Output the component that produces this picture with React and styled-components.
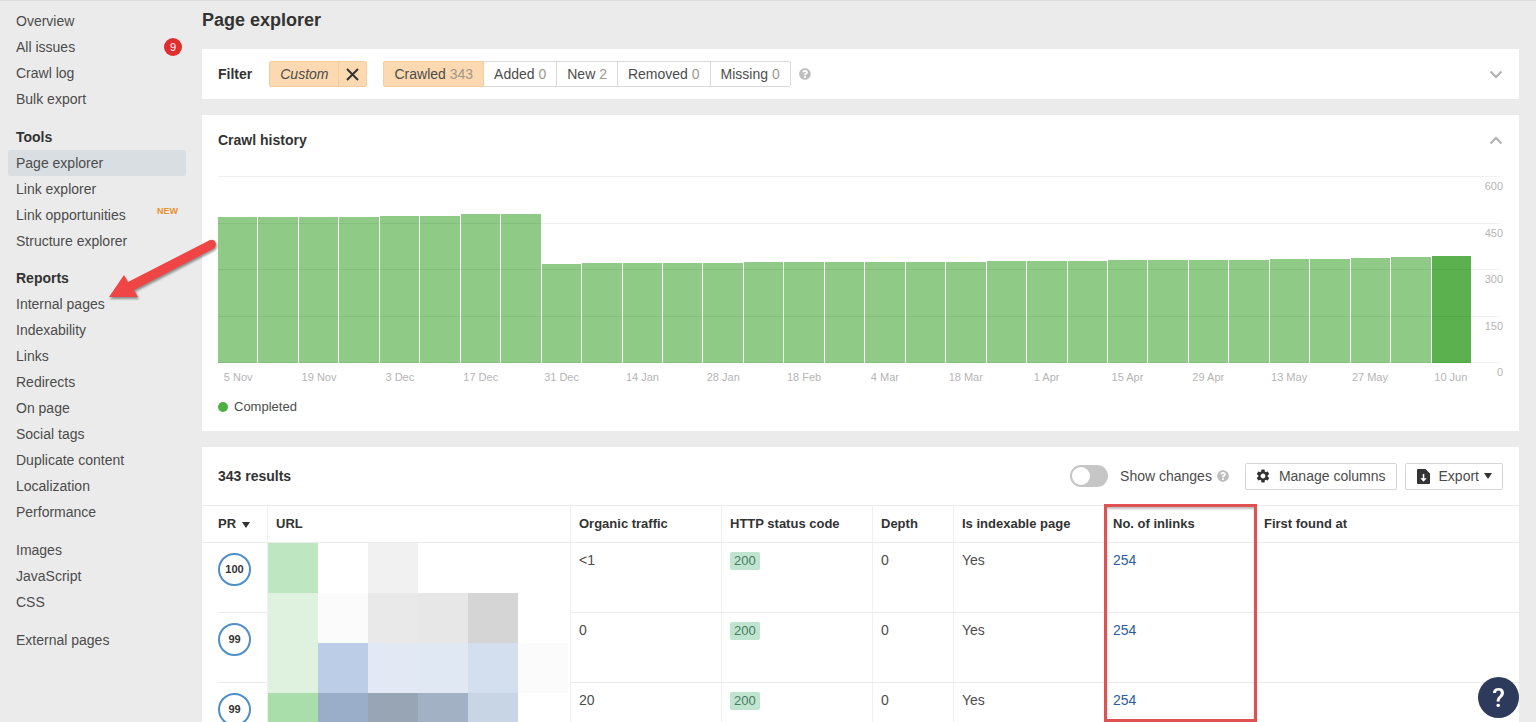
import { useState } from "react";
import styled, { createGlobalStyle } from "styled-components";
import { FaQuestionCircle } from "react-icons/fa";
import { MdSettings } from "react-icons/md";

const GlobalStyle = createGlobalStyle`
  *, *::before, *::after {
    box-sizing: border-box;
  }

  body {
    margin: 0;
    background: #ebebeb;
    color: #4c4c4c;
    font-family: "Liberation Sans", Arial, sans-serif;
    font-size: 14px;
    line-height: 18px;
  }

  button {
    font: inherit;
    color: inherit;
    cursor: pointer;
  }
`;

const Layout = styled.div`
  display: flex;
  gap: 16px;
  height: 100vh;
  overflow: hidden;
  padding-right: 17px;
  border-top: 1px solid #dcdcdc;
`;

/* ---------- sidebar ---------- */

const Sidebar = styled.nav`
  position: relative;
  flex: 0 0 186px;
  padding: 7px 0 0 8px;
`;

const NavGroup = styled.div`
  margin-bottom: ${(props) => (props.$tight ? "11px" : "12px")};
`;

const NavHeading = styled.h2`
  margin: 0;
  padding: 4px 8px;
  color: #333;
  font-size: 14px;
  line-height: 18px;
`;

const NavLink = styled.a`
  display: flex;
  justify-content: space-between;
  align-items: center;
  height: 26px;
  padding: 0 8px;
  border-radius: 2px;
  background: ${(props) => (props.$active ? "#d9dee2" : "transparent")};
  color: #4c4c4c;
  text-decoration: none;
  white-space: nowrap;
`;

const Badge = styled.span`
  width: 18px;
  height: 18px;
  margin-right: -4px;
  border-radius: 50%;
  background: #e12d2d;
  color: #fff;
  font-size: 11px;
  text-align: center;
`;

const NewTag = styled.span`
  align-self: flex-start;
  color: #e8912d;
  font-size: 9px;
  font-weight: 700;
`;

const Arrow = styled.svg`
  position: absolute;
  top: 234px;
  left: 104px;
  z-index: 3;
  width: 120px;
  height: 74px;
  filter: drop-shadow(1px 2px 1px rgba(0, 0, 0, 0.4));
`;

/* ---------- main column ---------- */

const Main = styled.main`
  flex: 1;
  min-width: 0;
`;

const PageTitle = styled.h1`
  margin: 0;
  padding: 7px 0 17px;
  color: #333;
  font-size: 18px;
  line-height: 24px;
`;

const Panel = styled.section`
  margin-bottom: 16px;
  background: #fff;
`;

const PanelTitle = styled.h2`
  margin: 0;
  color: #333;
  font-size: 14px;
  line-height: 18px;
`;

const FilterPanel = styled(Panel)`
  display: flex;
  align-items: center;
  height: 50px;
  padding: 0 16px;
`;

const CustomChip = styled.div`
  display: flex;
  height: 26px;
  margin: 0 16px 0 17px;
  border: 1px solid #f3cd9f;
  border-radius: 2px;
  background: #fcd9b0;
`;

const ChipButton = styled.button`
  display: flex;
  align-items: center;
  padding: 0 10px;
  border: 0;
  background: none;
  font-style: italic;
`;

const ChipClose = styled.button`
  display: flex;
  align-items: center;
  padding: 0 7px;
  border: 0;
  border-left: 1px solid #f3cd9f;
  background: none;
`;

const Segments = styled.div`
  display: flex;
`;

const Segment = styled.button`
  height: 26px;
  padding: 0 10px;
  border: 1px solid ${(props) => (props.$active ? "#f3cd9f" : "#d9d9d9")};
  border-left-width: ${(props) => (props.$active ? "1px" : "0")};
  background: ${(props) => (props.$active ? "#fcd9b0" : "#fff")};

  &:first-child {
    border-radius: 2px 0 0 2px;
  }

  &:last-child {
    border-radius: 0 2px 2px 0;
  }

  span {
    color: #a0978d;
  }
`;

const Help = styled(FaQuestionCircle)`
  flex: none;
  width: 12px;
  height: 12px;
  color: #bdbdbd;
`;

const FilterHelp = styled(Help)`
  margin-left: 8px;
`;

const CollapseButton = styled.button`
  display: flex;
  margin-left: auto;
  padding: 0;
  border: 0;
  background: none;
  color: #b0b0b0;
`;

/* ---------- crawl history ---------- */

const HistoryPanel = styled(Panel)`
  padding: 16px 16px 15px;
`;

const PanelHead = styled.div`
  display: flex;
  align-items: center;
  margin-bottom: 27px;
`;

const Plot = styled.div`
  display: grid;
  height: 187px;
`;

const Scale = styled.div`
  grid-area: 1 / 1;
  z-index: 1;
  display: flex;
  flex-direction: column;
  height: 187px;
  margin-right: 3px;
`;

const ScaleStep = styled.div`
  flex: 1 1 0;
  min-height: 0;
  border-top: 1px solid rgba(0, 0, 0, 0.06);

  &:last-child {
    flex: none;
    height: 0;
  }
`;

const ScaleLabel = styled.div`
  margin-right: -3px;
  color: #b5b5b5;
  font-size: 11px;
  text-align: right;
`;

const Bars = styled.div`
  grid-area: 1 / 1;
  display: flex;
  align-items: flex-end;
  gap: 1px;
  height: 187px;
  margin-right: 32px;
`;

const Bar = styled.div`
  flex: 1;
  background: ${(props) => (props.$current ? "#5bb14d" : "#8fca87")};
`;

const Dates = styled.div`
  display: grid;
  grid-template-columns: repeat(31, minmax(0, 1fr));
  margin: 5px 32px 0 0;
  color: #b5b5b5;
  font-size: 11px;
`;

const DateLabel = styled.span`
  justify-self: center;
  white-space: nowrap;
`;

const Legend = styled.div`
  display: flex;
  align-items: center;
  gap: 6px;
  margin-top: 12px;
  font-size: 13px;
`;

const Dot = styled.span`
  width: 10px;
  height: 10px;
  border-radius: 50%;
  background: #4caf43;
`;

/* ---------- results ---------- */

const ResultsHead = styled.div`
  display: flex;
  align-items: center;
  gap: 8px;
  height: 58px;
  padding: 0 16px;
`;

const ShowChanges = styled.label`
  display: flex;
  align-items: center;
  margin: 0 8px 0 auto;

  svg {
    margin-left: 5px;
  }
`;

const Toggle = styled.input`
  appearance: none;
  width: 38px;
  height: 22px;
  margin: 0 12px 0 0;
  padding: 2px;
  border-radius: 11px;
  background: ${(props) => (props.checked ? "#5bb14d" : "#c6c6c6")};

  &::before {
    content: "";
    display: block;
    width: 18px;
    height: 18px;
    margin-left: ${(props) => (props.checked ? "16px" : "0")};
    border-radius: 50%;
    background: #fff;
  }
`;

const ToolButton = styled.button`
  display: flex;
  align-items: center;
  gap: 8px;
  height: 27px;
  padding: 0 10px 0 9px;
  border: 1px solid #d5d5d5;
  border-radius: 2px;
  background: #fff;

  svg {
    color: #333;
  }
`;

const ExportLabel = styled.span`
  display: flex;
  align-items: center;
  gap: 5px;
`;

const Table = styled.table`
  width: 100%;
  table-layout: fixed;
  border-collapse: separate;
  border-spacing: 0;
`;

const HeaderCell = styled.th`
  position: relative;
  height: 38px;
  padding: 0 8px;
  border-top: 1px solid #ececec;
  border-right: 1px solid #f0f0f0;
  border-bottom: 1px solid #ececec;
  color: #333;
  font-size: 13px;
  text-align: left;
  white-space: nowrap;

  &:first-child {
    padding-left: 16px;
  }

  &:last-child {
    border-right: 0;
  }

  svg {
    margin-left: 6px;
  }
`;

const Highlight = styled.div`
  position: absolute;
  top: -2px;
  left: -1px;
  z-index: 2;
  width: 153px;
  height: calc(100vh - 504px);
  border: 3px solid #e05252;
  box-shadow: inset 0 2px 2px rgba(0, 0, 0, 0.25);
  pointer-events: none;
`;

const Cell = styled.td`
  height: 70px;
  padding: 8px 8px 0;
  border-right: 1px solid #f0f0f0;
  border-bottom: 1px solid #ececec;
  vertical-align: top;

  &:last-child {
    border-right: 0;
  }
`;

const RankCell = styled(Cell)`
  padding: 10px 0 0 16px;
  border-bottom: 0;
`;

const RankInner = styled.div`
  height: 60px;
  border-bottom: 1px solid #ececec;
`;

const Ring = styled.div`
  width: 33px;
  height: 33px;
  border: 2px solid #4d8fc6;
  border-radius: 50%;
  color: #333;
  font-size: 11px;
  font-weight: 700;
  line-height: 28px;
  text-align: center;
`;

const UrlCell = styled(Cell)`
  padding: 0;
`;

const Mosaic = styled.div`
  display: grid;
  grid-template-columns: repeat(6, 50px);
  grid-auto-rows: 50px;
`;

const Tile = styled.div`
  background: ${(props) => props.$color};
`;

const Status = styled.span`
  display: inline-block;
  padding: 0 4px;
  border-radius: 2px;
  background: #bfe5d0;
  color: #4b7a60;
  font-size: 13px;
`;

const InlinksLink = styled.a`
  color: #2a5d9c;
  text-decoration: none;
`;

const SupportButton = styled.button`
  position: fixed;
  right: 17px;
  bottom: 4px;
  z-index: 4;
  width: 41px;
  height: 41px;
  padding: 0;
  border: 0;
  border-radius: 50%;
  background: #2d3a5b;
  color: #fff;
  font-family: Roboto, sans-serif;
  font-size: 26px;
  font-weight: 500;
`;

const navGroups = [
  {
    links: [
      { label: "Overview" },
      { label: "All issues", badge: 9 },
      { label: "Crawl log" },
      { label: "Bulk export" },
    ],
  },
  {
    heading: "Tools",
    tight: true,
    links: [
      { label: "Page explorer", active: true },
      { label: "Link explorer" },
      { label: "Link opportunities", isNew: true },
      { label: "Structure explorer" },
    ],
  },
  {
    heading: "Reports",
    links: [
      { label: "Internal pages" },
      { label: "Indexability" },
      { label: "Links" },
      { label: "Redirects" },
      { label: "On page" },
      { label: "Social tags" },
      { label: "Duplicate content" },
      { label: "Localization" },
      { label: "Performance" },
    ],
  },
  {
    links: [{ label: "Images" }, { label: "JavaScript" }, { label: "CSS" }],
  },
  { links: [{ label: "External pages" }] },
];

const filters = [
  { label: "Crawled", count: 343 },
  { label: "Added", count: 0 },
  { label: "New", count: 2 },
  { label: "Removed", count: 0 },
  { label: "Missing", count: 0 },
];

const maxPages = 600;
const crawls = [
  467, 467, 468, 468, 471, 471, 477, 477, 318, 321, 321, 322, 322, 323, 323,
  323, 324, 324, 325, 327, 327, 328, 330, 330, 331, 331, 335, 335, 337, 341,
  343,
];

const dates = [
  "5 Nov",
  "19 Nov",
  "3 Dec",
  "17 Dec",
  "31 Dec",
  "14 Jan",
  "28 Jan",
  "18 Feb",
  "4 Mar",
  "18 Mar",
  "1 Apr",
  "15 Apr",
  "29 Apr",
  "13 May",
  "27 May",
  "10 Jun",
];

const rows = [
  { rank: 100, traffic: "<1" },
  { rank: 99, traffic: "0" },
  { rank: 99, traffic: "20" },
];

const tiles = [
  ["#bde6c1", "#fff", "#f1f1f1", "#fff", "#fff", "#fff"],
  ["#dff2df", "#fbfbfb", "#e9e9e9", "#e7e7e7", "#d5d5d5", "#fff"],
  ["#dff2df", "#bccde7", "#e2e9f5", "#e0e8f3", "#d3deee", "#fbfbfb"],
  ["#a9dda9", "#9aadc9", "#97a5b5", "#a2b1c4", "#c8d5e5", "#fff"],
];

function Chevron({ up }) {
  return (
    <svg width="14" height="9" viewBox="0 0 14 9" fill="none">
      <path
        d={up ? "M1.5 7.5 7 2l5.5 5.5" : "M1.5 1.5 7 7l5.5-5.5"}
        stroke="currentColor"
        strokeWidth="2"
      />
    </svg>
  );
}

function Caret() {
  return (
    <svg width="8" height="6" viewBox="0 0 8 6">
      <path d="M0 0h8L4 6z" fill="currentColor" />
    </svg>
  );
}

function FileDownIcon() {
  return (
    <svg width="16" height="15" viewBox="-2 0 16 15">
      <path
        fill="currentColor"
        fillRule="evenodd"
        d="M1 0h7.5L13 4.5V14a1 1 0 0 1-1 1H1a1 1 0 0 1-1-1V1a1 1 0 0 1 1-1Zm4.7 5v4.2H3.3l3.2 3.5 3.2-3.5H7.3V5Z"
      />
    </svg>
  );
}

function Navigation() {
  return (
    <Sidebar>
      {navGroups.map((group, index) => (
        <NavGroup key={index} $tight={group.tight}>
          {group.heading && <NavHeading>{group.heading}</NavHeading>}
          {group.links.map((link) => (
            <NavLink href="#" key={link.label} $active={link.active}>
              {link.label}
              {link.badge && <Badge>{link.badge}</Badge>}
              {link.isNew && <NewTag>NEW</NewTag>}
            </NavLink>
          ))}
        </NavGroup>
      ))}
      <Arrow viewBox="0 0 120 74" aria-hidden="true">
        <path
          fill="#f04545"
          d="M5 62 20 40l4 7 82-42q5-1 6 4 0 3-3 5L30 55l4 7Z"
        />
      </Arrow>
    </Sidebar>
  );
}

function FilterBar() {
  const [active, setActive] = useState("Crawled");

  return (
    <FilterPanel>
      <PanelTitle>Filter</PanelTitle>
      <CustomChip>
        <ChipButton>Custom</ChipButton>
        <ChipClose aria-label="Clear filter">
          <svg width="13" height="13" viewBox="0 0 13 13">
            <path
              d="m1 1 11 11M12 1 1 12"
              stroke="#333"
              strokeWidth="2"
            />
          </svg>
        </ChipClose>
      </CustomChip>
      <Segments>
        {filters.map(({ label, count }) => (
          <Segment
            key={label}
            $active={active === label}
            onClick={() => setActive(label)}
          >
            {label} <span>{count}</span>
          </Segment>
        ))}
      </Segments>
      <FilterHelp />
      <CollapseButton aria-label="Expand filter">
        <Chevron />
      </CollapseButton>
    </FilterPanel>
  );
}

function CrawlHistory() {
  return (
    <HistoryPanel>
      <PanelHead>
        <PanelTitle>Crawl history</PanelTitle>
        <CollapseButton aria-label="Collapse crawl history">
          <Chevron up />
        </CollapseButton>
      </PanelHead>
      <Plot>
        <Scale>
          {[600, 450, 300, 150, 0].map((value) => (
            <ScaleStep key={value}>
              <ScaleLabel>{value}</ScaleLabel>
            </ScaleStep>
          ))}
        </Scale>
        <Bars>
          {crawls.map((pages, index) => (
            <Bar
              key={index}
              $current={index === crawls.length - 1}
              style={{ height: `${(pages / maxPages) * 100}%` }}
            />
          ))}
        </Bars>
      </Plot>
      <Dates>
        {crawls.map((_, index) => (
          <DateLabel key={index}>
            {index % 2 === 0 ? dates[index / 2] : null}
          </DateLabel>
        ))}
      </Dates>
      <Legend>
        <Dot />
        Completed
      </Legend>
    </HistoryPanel>
  );
}

function Results() {
  const [showChanges, setShowChanges] = useState(false);

  return (
    <Panel>
      <ResultsHead>
        <PanelTitle>343 results</PanelTitle>
        <ShowChanges>
          <Toggle
            type="checkbox"
            checked={showChanges}
            onChange={(e) => setShowChanges(e.target.checked)}
          />
          Show changes
          <Help />
        </ShowChanges>
        <ToolButton>
          <MdSettings size={16} />
          Manage columns
        </ToolButton>
        <ToolButton>
          <FileDownIcon />
          <ExportLabel>
            Export <Caret />
          </ExportLabel>
        </ToolButton>
      </ResultsHead>
      <Table>
        <colgroup>
          <col width="66" />
          <col width="303" />
          <col width="151" />
          <col width="151" />
          <col width="81" />
          <col width="151" />
          <col width="151" />
          <col />
        </colgroup>
        <thead>
          <tr>
            <HeaderCell>
              PR
              <Caret />
            </HeaderCell>
            <HeaderCell>URL</HeaderCell>
            <HeaderCell>Organic traffic</HeaderCell>
            <HeaderCell>HTTP status code</HeaderCell>
            <HeaderCell>Depth</HeaderCell>
            <HeaderCell>Is indexable page</HeaderCell>
            <HeaderCell>
              No. of inlinks
              <Highlight />
            </HeaderCell>
            <HeaderCell>First found at</HeaderCell>
          </tr>
        </thead>
        <tbody>
          {rows.map((row, index) => (
            <tr key={index}>
              <RankCell>
                <RankInner>
                  <Ring>{row.rank}</Ring>
                </RankInner>
              </RankCell>
              {index === 0 && (
                <UrlCell rowSpan={rows.length}>
                  <Mosaic>
                    {tiles.flat().map((color, tile) => (
                      <Tile key={tile} $color={color} />
                    ))}
                  </Mosaic>
                </UrlCell>
              )}
              <Cell>{row.traffic}</Cell>
              <Cell>
                <Status>200</Status>
              </Cell>
              <Cell>0</Cell>
              <Cell>Yes</Cell>
              <Cell>
                <InlinksLink href="#">254</InlinksLink>
              </Cell>
              <Cell />
            </tr>
          ))}
        </tbody>
      </Table>
    </Panel>
  );
}

function App() {
  return (
    <>
      <GlobalStyle />
      <Layout>
        <Navigation />
        <Main>
          <PageTitle>Page explorer</PageTitle>
          <FilterBar />
          <CrawlHistory />
          <Results />
        </Main>
      </Layout>
      <SupportButton aria-label="Help">?</SupportButton>
    </>
  );
}

export default App;
